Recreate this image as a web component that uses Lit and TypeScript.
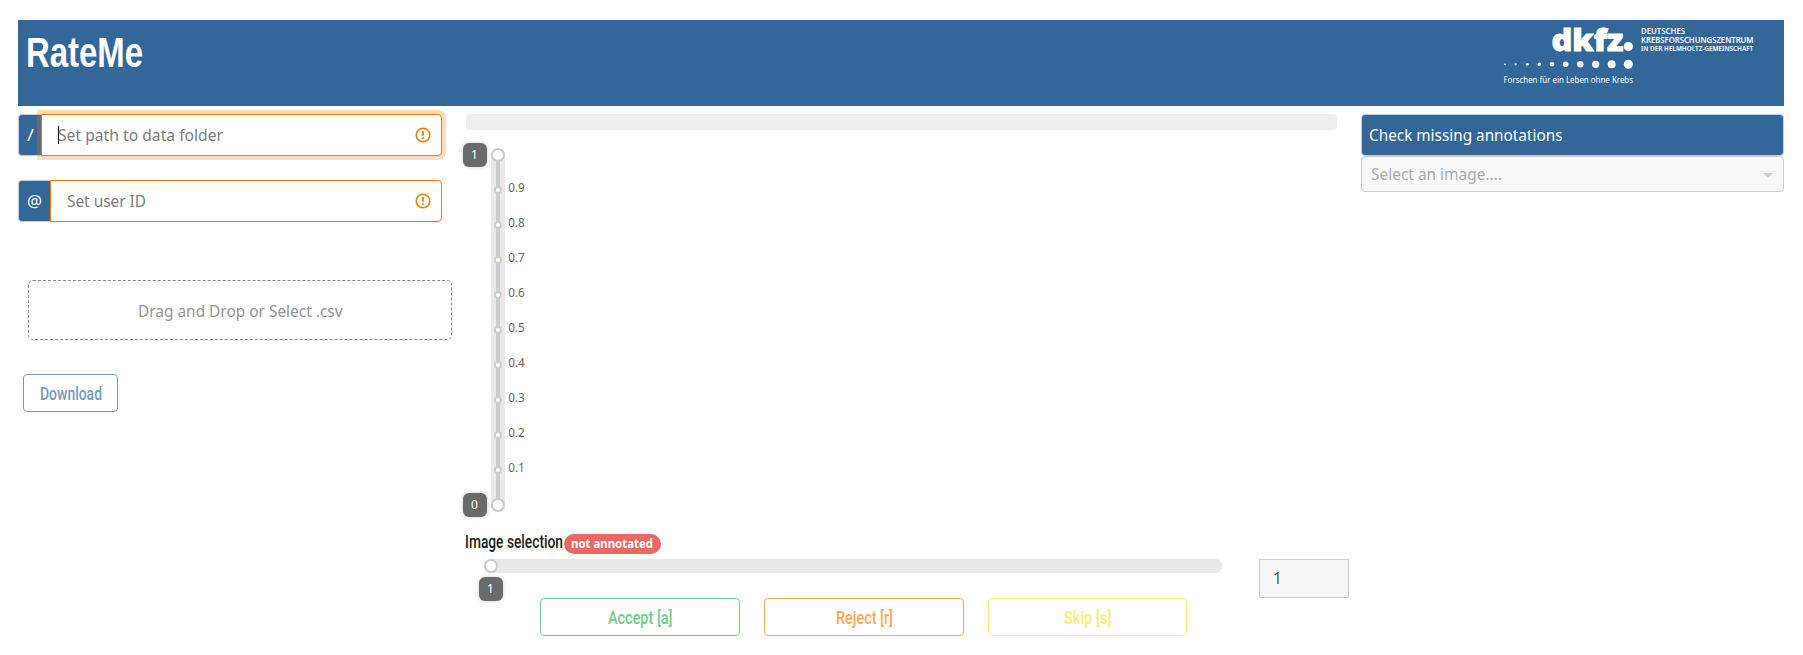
import { LitElement, html, svg, css } from "lit";
import { customElement, property } from "lit/decorators.js";

/** A single line of text set to an exact advance width. */
@customElement("fit-text")
class FitText extends LitElement {
  @property() text = "";
  @property({ type: Number }) width = 100;
  @property({ type: Number }) height = 24;
  @property({ type: Number }) baseline = 18;
  static styles = css`
    :host { display: block; flex: none; }
    svg { display: block; overflow: visible; }
    text { fill: currentColor; }
  `;
  render() {
    return html`<svg width=${this.width} height=${this.height}>
      <text x="0" y=${this.baseline} textLength=${this.width} lengthAdjust="spacingAndGlyphs">${this.text}</text>
    </svg>`;
  }
}

@customElement("brand-logo")
class BrandLogo extends LitElement {
  static styles = css`
    :host { display: block; }
    svg { display: block; fill: #fff; font-family: "Noto Sans", sans-serif; }
    .word { font: 900 29.5px "Noto Sans", "Open Sans", sans-serif; stroke: #fff; stroke-width: 0.9px; }
    .line { font-size: 8.4px; font-weight: 600; }
    .small { font-size: 7.4px; font-weight: 600; }
    .claim { font-size: 8.8px; }
  `;
  render() {
    const dots = [[45, 0.9], [77, 1.1], [112, 1.4], [148, 1.7], [186, 2.2], [227, 2.8], [271, 3.2], [317, 3.6], [365, 4], [415, 4.5]];
    return html`<svg width="280" height="75">
      <text class="word" x="61.5" y="31" textLength="72" lengthAdjust="spacingAndGlyphs">dkfz</text>
      <circle cx="138.3" cy="26.6" r="4.6"></circle>
      ${dots.map(([x, r]) => svg`<circle cx=${x / 3} cy="44.3" r=${r}></circle>`)}
      <text class="claim" x="13.5" y="62.9" textLength="129.5" lengthAdjust="spacingAndGlyphs">Forschen für ein Leben ohne Krebs</text>
      <text class="line" x="151" y="14" textLength="44" lengthAdjust="spacingAndGlyphs">DEUTSCHES</text>
      <text class="line" x="151" y="23.2" textLength="112.5" lengthAdjust="spacingAndGlyphs">KREBSFORSCHUNGSZENTRUM</text>
      <text class="small" x="151" y="31.3" textLength="112.3" lengthAdjust="spacingAndGlyphs">IN DER HELMHOLTZ-GEMEINSCHAFT</text>
    </svg>`;
  }
}

@customElement("rating-slider")
class RatingSlider extends LitElement {
  static styles = css`
    :host { display: block; }
    svg { display: block; overflow: visible; font: 12px "Noto Sans", sans-serif; }
    .rail { fill: #e9e9e9; }
    .track { fill: #ccc; }
    .knob { fill: #fff; stroke: #ccc; stroke-width: 2px; }
    .mark { fill: #666; }
    .tip { fill: #6a6a6a; filter: drop-shadow(0 0 2px #0003); }
    .value { fill: #fff; }
  `;
  render() {
    const marks = [0.9, 0.8, 0.7, 0.6, 0.5, 0.4, 0.3, 0.2, 0.1];
    return html`<svg width="70" height="374">
      <rect class="rail" x="25" y="5" width="14" height="364" rx="6"></rect>
      <rect class="track" x="30" y="12" width="4" height="350"></rect>
      ${marks.map((m, i) => svg`
        <circle class="knob" cx="32" cy=${47 + i * 35} r="3"></circle>
        <text class="mark" x="42.3" y=${49 + i * 35} textLength="16.5" lengthAdjust="spacingAndGlyphs">${m}</text>`)}
      <circle class="knob" cx="32" cy="12" r="6"></circle>
      <circle class="knob" cx="32" cy="362" r="6"></circle>
      <rect class="tip" x="-3" y="0" width="24" height="24" rx="6"></rect>
      <text class="value" x="5" y="16">1</text>
      <rect class="tip" x="-3" y="350" width="24" height="24" rx="6"></rect>
      <text class="value" x="5" y="366">0</text>
    </svg>`;
  }
}

@customElement("app-root")
class AppRoot extends LitElement {
  static styles = css`
    :host { display: block; box-sizing: border-box; width: 1803px; height: 655px; padding: 20px 19px 0 18px; background: #fff; font: 15.8px "Noto Sans", sans-serif; overflow: hidden; }
    * { box-sizing: border-box; }
    header { display: flex; justify-content: space-between; height: 86px; background: #336699; color: #fff; padding: 0 14px 0 8px; }
    .title { font: bold 42px "Liberation Sans", sans-serif; }
    main { display: grid; grid-template-columns: 448px 895px 423px; padding-top: 8px; }
    .group { display: flex; width: 424px; height: 42px; margin-bottom: 24px; }
    .addon { display: flex; background: #336699; color: #fff; border: 1px solid #ccc; border-right: 0; border-radius: 4px 0 0 4px; padding-left: 8px; }
    .path { width: 23px; }
    .user { width: 32px; }
    .field { flex: 1; display: flex; justify-content: space-between; border: 1px solid #f57a00; border-radius: 0 4px 4px 0; color: #7d7d7d; padding: 0 10px 0 16px; background: #fff; }
    .focus { box-shadow: 0 0 0 4px rgba(245, 122, 0, 0.25); }
    .entry { display: flex; }
    .caret { width: 1px; height: 18px; margin: 11px -1px 0 0; background: #111; }
    .warn { display: block; margin-top: 12px; }
    .drop { display: flex; justify-content: center; width: 424px; height: 60px; margin: 58px 0 34px 10px; border: 1px dashed #888; border-radius: 5px; color: #959595; }
    .btn { display: flex; justify-content: center; height: 38px; border: 1px solid; border-radius: 4px; font: 500 18px Roboto, "Liberation Sans", sans-serif; background: #fff; }
    .download { width: 95px; margin-left: 5px; padding-left: 1px; color: #7799bf; }
    .progress { width: 871px; height: 16px; border-radius: 4px; background: #eee; margin-bottom: 13px; }
    .selection { display: flex; height: 20px; margin: 17px 0 0 -1px; color: #222; font: 500 17.5px Roboto, sans-serif; }
    .badge { width: 97px; height: 20px; border-radius: 10px; margin-left: 1px; padding-left: 7px; background: #eb6864; color: #fff; font: bold 12px "Noto Sans", sans-serif; }
    .lower { display: grid; grid-template-columns: 793px 90px; padding-top: 5px; }
    .slide { display: block; overflow: visible; }
    .rail { fill: #e9e9e9; }
    .knob { fill: #fff; stroke: #ccc; stroke-width: 2px; }
    .tip { fill: #6a6a6a; filter: drop-shadow(0 0 2px #0003); }
    .value { fill: #fff; font-size: 12px; }
    .number { height: 39px; border: 1px solid #ccc; background: #f7f7f7; color: #555; padding-left: 13px; }
    .actions { display: grid; grid-template-columns: 200px 200px 199px; column-gap: 24px; padding-left: 74px; margin-top: -3px; }
    .accept { color: #70cd8d; }
    .reject { color: #f8a955; }
    .skip { color: #f9ee6f; }
    .check { height: 42px; border: 1px solid #ccc; border-radius: 4px; background: #336699; color: #fff; padding-left: 7px; }
    .select { display: flex; justify-content: space-between; height: 36px; border: 1px solid #ccc; border-radius: 4px; background: #f9f9f9; color: #aaa; padding: 0 10px 0 9px; }
    .arrow { margin-top: 16px; fill: #d0d0d0; }
  `;

  warning() {
    return html`<svg class="warn" width="16" height="16" fill="none" stroke="#f57a00">
      <circle cx="8" cy="8" r="6.8" stroke-width="1.5"></circle>
      <path d="M8 4v4.7M8 10.3v1.7" stroke-width="1.8"></path>
    </svg>`;
  }

  render() {
    return html`
      <header>
        <fit-text class="title" text="RateMe" width="117" height="60" baseline="46.7"></fit-text>
        <brand-logo></brand-logo>
      </header>
      <main>
        <section>
          <div class="group">
            <div class="addon path"><fit-text text="/" width="7" height="38" baseline="26"></fit-text></div>
            <div class="field focus">
              <div class="entry"><div class="caret"></div><fit-text text="Set path to data folder" width="165" height="38" baseline="26.3"></fit-text></div>
              ${this.warning()}
            </div>
          </div>
          <div class="group">
            <div class="addon user"><fit-text text="@" width="15" height="38" baseline="25.5"></fit-text></div>
            <div class="field"><fit-text text="Set user ID" width="79" height="38" baseline="26"></fit-text>${this.warning()}</div>
          </div>
          <div class="drop"><fit-text text="Drag and Drop or Select .csv" width="204.5" height="58" baseline="36.2"></fit-text></div>
          <div class="btn download"><fit-text text="Download" width="62" height="36" baseline="25.3"></fit-text></div>
        </section>
        <section>
          <div class="progress"></div>
          <rating-slider></rating-slider>
          <div class="selection">
            <fit-text text="Image selection" width="98" height="20" baseline="13.9"></fit-text>
            <div class="badge"><fit-text text="not annotated" width="82" height="20" baseline="14"></fit-text></div>
          </div>
          <div class="lower">
            <svg class="slide" width="760" height="42">
              <rect class="rail" x="18" y="0" width="738" height="14" rx="6"></rect>
              <circle class="knob" cx="25" cy="7" r="6"></circle>
              <rect class="tip" x="13" y="18" width="24" height="24" rx="6"></rect>
              <text class="value" x="21" y="34">1</text>
            </svg>
            <div class="number"><fit-text text="1" width="9" height="37" baseline="24.2"></fit-text></div>
          </div>
          <div class="actions">
            <div class="btn accept"><fit-text text="Accept [a]" width="64.5" height="36" baseline="25.2"></fit-text></div>
            <div class="btn reject"><fit-text text="Reject [r]" width="57" height="36" baseline="25.2"></fit-text></div>
            <div class="btn skip"><fit-text text="Skip [s]" width="47.5" height="36" baseline="25.2"></fit-text></div>
          </div>
        </section>
        <section>
          <div class="check"><fit-text text="Check missing annotations" width="193.5" height="40" baseline="26.4"></fit-text></div>
          <div class="select">
            <fit-text text="Select an image...." width="131" height="34" baseline="23"></fit-text>
            <svg class="arrow" width="10" height="5"><path d="M0 0h10L5 5z"></path></svg>
          </div>
        </section>
      </main>`;
  }
}
